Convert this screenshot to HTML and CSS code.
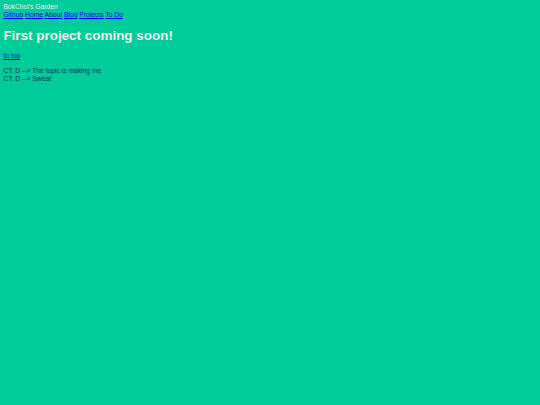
FILE: index.html
```html
<!DOCTYPE html>
<html>
<head>
<meta charset="utf-8">
<link rel="stylesheet" href="styles.css">
</head>
<body>
<header class="site-header">
<div class="site-title">BokChoi's Garden</div>
<nav class="nav"><a href="#">Github</a> <a href="#">Home</a> <a href="#">About</a> <a href="#">Blog</a> <a href="#">Projects</a> <a href="#">To Do</a></nav>
</header>
<main>
<h1 class="headline">First project coming soon!</h1>
<p class="top-link"><a href="#">to top</a></p>
<p class="notes">CT: D --&gt; The topic is making me<br>CT: D --&gt; Sweat</p>
</main>
</body>
</html>
```
FILE: styles.css
```css
html { background: #00cc99; }
body {
  margin: 3.4px;
  font-family: "Liberation Sans", Arial, sans-serif;
  font-size: 6.72px;
  line-height: 7.75px;
  color: #003366;
}
.site-title { color: #f0f0f0; }
.nav a { color: #0000ee; }
.headline {
  color: #f0f0f0;
  font-size: 13.44px;
  line-height: 15.5px;
  margin: 9px 0;
}
.top-link { margin: 6.7px 0; }
.top-link a { color: #0000ee; }
.notes { margin: 6.7px 0; }
```
